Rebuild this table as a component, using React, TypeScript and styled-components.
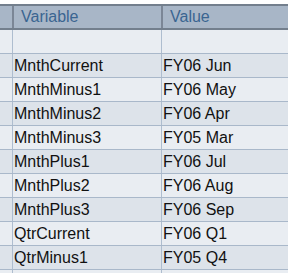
import * as React from "react";
import styled, { createGlobalStyle } from "styled-components";

const GlobalStyle = createGlobalStyle`
  html, body {
    margin: 0;
    padding: 0;
    background: #ffffff;
  }
`;

const Page = styled.div`
  padding-top: 4px;
  width: 296px;
  height: 273px;
  overflow: hidden;
  background: #ffffff;
  font-family: "Liberation Sans", Arial, sans-serif;
`;

const Table = styled.div`
  width: 288px;
  display: flex;
  flex-direction: column;
`;

const HeadRow = styled.div`
  display: grid;
  grid-template-columns: 12px 149px 127px;
  height: 26px;
  box-sizing: border-box;
  background: #a8b6c7;
  border-top: 2px solid #737f8d;
  border-bottom: 2px solid #737f8d;
`;

const HeadCell = styled.div`
  box-sizing: border-box;
  display: flex;
  align-items: center;
  padding-left: 7px;
  font-size: 16px;
  color: #3a6591;
  border-left: 2px solid #7b8696;
  &:first-child {
    border-left: none;
    padding: 0;
  }
`;

const Row = styled.div<{ $odd: boolean }>`
  display: grid;
  grid-template-columns: 12px 149px 127px;
  height: 24px;
  box-sizing: border-box;
  background: ${(p) => (p.$odd ? "#dde3ea" : "#e9edf2")};
  border-bottom: 1px solid #a9b8ca;
`;

const Cell = styled.div`
  box-sizing: border-box;
  display: flex;
  align-items: center;
  padding-left: 1px;
  font-size: 16px;
  color: #111111;
  white-space: nowrap;
  border-left: 1px solid #aebdcf;
  &:first-child {
    border-left: none;
    padding: 0;
  }
`;

const rows: [string, string][] = [
  ["", ""],
  ["MnthCurrent", "FY06 Jun"],
  ["MnthMinus1", "FY06 May"],
  ["MnthMinus2", "FY06 Apr"],
  ["MnthMinus3", "FY05 Mar"],
  ["MnthPlus1", "FY06 Jul"],
  ["MnthPlus2", "FY06 Aug"],
  ["MnthPlus3", "FY06 Sep"],
  ["QtrCurrent", "FY06 Q1"],
  ["QtrMinus1", "FY05 Q4"],
  ["", ""],
];

export default function App() {
  return (
    <Page>
      <GlobalStyle />
      <Table>
        <HeadRow>
          <HeadCell />
          <HeadCell>Variable</HeadCell>
          <HeadCell>Value</HeadCell>
        </HeadRow>
        {rows.map(([name, value], i) => (
          <Row key={i} $odd={i % 2 === 1}>
            <Cell />
            <Cell>{name}</Cell>
            <Cell>{value}</Cell>
          </Row>
        ))}
      </Table>
    </Page>
  );
}
